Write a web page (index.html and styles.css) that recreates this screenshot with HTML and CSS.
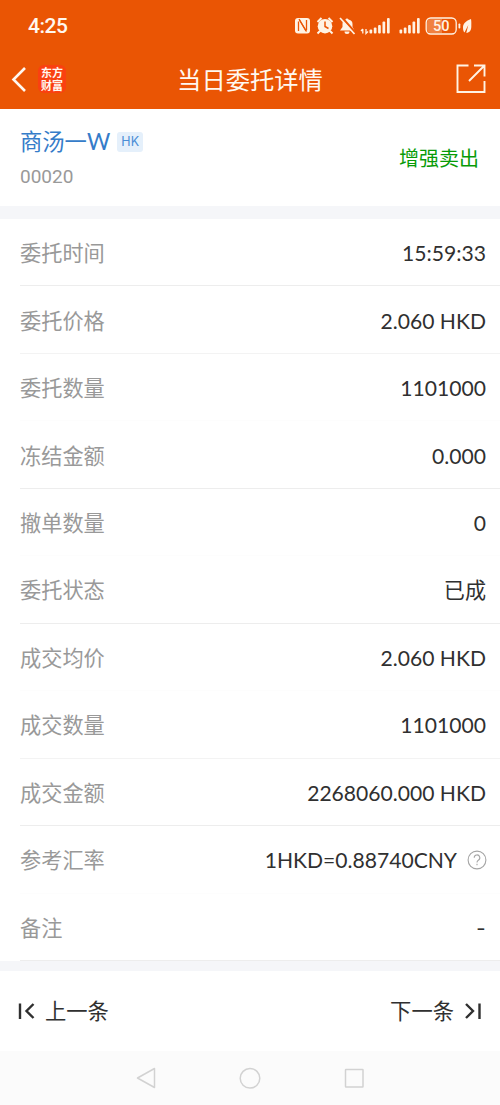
FILE: index.html
```html
<!DOCTYPE html>
<html lang="zh-CN">
<head>
<meta charset="utf-8">
<title>当日委托详情</title>
<link rel="stylesheet" href="styles.css">
</head>
<body>
<header class="top">
  <div class="status">
    <span class="clock">4:25</span>
    <svg class="status-icons" width="184" height="24" viewBox="0 0 184 24" fill="#fff3e4">
      <rect x="0" y="5" width="15" height="15.500" rx="3"/>
      <path d="M3.500 18V8.500M4.500 7l6.500 11M11.500 17V7" fill="none" stroke="#ea5504" stroke-width="1.300"/>
      <path d="M4 6l7.500 12.500" stroke="#ea5504" stroke-width="1.300"/>
      <circle cx="30" cy="13.200" r="7.300"/>
      <path d="M22.500 9l4-4M37.500 9l-4-4M25 18l-2.500 2.500M35 18l2.500 2.500" stroke="#fff3e4" stroke-width="2"/>
      <path d="M30 8.500v5l3.500 2" fill="none" stroke="#ea5504" stroke-width="1.500"/>
      <path d="M45 17.500l2.500-3.500v-3c0-3 1.500-4 3-4.500a1.600 1.600 0 0 1 3 0C56.500 7 57.500 9 57.500 11v3l2 3.500z"/>
      <path d="M49.500 18.500h5a2.500 2.500 0 0 1-5 0z"/>
      <path d="M46.500 4l14 16" stroke="#ea5504" stroke-width="2.400"/>
      <path d="M45 5l14.500 16" stroke="#fff3e4" stroke-width="1.700"/>
      <path d="M67.800 16v4.500M66 18l1.800-2M71 16v4.500l2-2" fill="none" stroke="#fff3e4" stroke-width="1.300"/>
      <rect x="74.500" y="16.500" width="2.700" height="4" rx="1"/><rect x="78.800" y="14.500" width="2.700" height="6" rx="1"/><rect x="83.100" y="12" width="2.700" height="8.500" rx="1"/><rect x="87.500" y="8.500" width="2.700" height="12" rx="1"/><rect x="92" y="5" width="2.700" height="15.500" rx="1"/>
      <rect x="104.500" y="16.500" width="2.700" height="4" rx="1"/><rect x="108.800" y="14.500" width="2.700" height="6" rx="1"/><rect x="113.100" y="12" width="2.700" height="8.500" rx="1"/><rect x="117.500" y="8.500" width="2.700" height="12" rx="1"/><rect x="122" y="5" width="2.700" height="15.500" rx="1"/>
      <rect x="131.200" y="5" width="30" height="16" rx="4.500" fill="none" stroke="#fff3e4" stroke-width="1.300"/>
      <path d="M147 6h-11a4 4 0 0 0-4 4v6a4 4 0 0 0 4 4h11z" opacity=".28"/>
      <text class="battery-text" x="146.300" y="18.300" text-anchor="middle">50</text>
      <rect x="163.500" y="10.500" width="1.800" height="5" rx=".8"/>
      <path d="M176 6c-5 2-8 4.500-8 8.500 0 2.500.5 4 1.500 5l3.800-7.500-2 8c3.500-.5 5-3 5-6.500 0-3 .2-4.500-.3-7.500z"/>
    </svg>
  </div>
  <div class="nav">
    <div class="nav-left">
      <svg width="16" height="26" viewBox="0 0 16 26"><path d="M14 2L2.500 13.500 14 25" fill="none" stroke="#fff8f0" stroke-width="2.600"/></svg>
      <span class="brand"><span>东方</span><span>财富</span></span>
    </div>
    <h1 class="title">当日委托详情</h1>
    <svg class="share" width="30" height="30" viewBox="0 0 30 30" fill="none" stroke="#fff3e4" stroke-width="1.900"><path d="M12.500 1.500H1.500v26.500h27V17M18 1.500h10.500v11M28.500 1.500L13 17"/></svg>
  </div>
</header>
<section class="stock">
  <div class="stock-info">
    <div class="name-line"><span class="name">商汤一<span class="suffix">W</span></span><span class="tag">HK</span></div>
    <div class="code">00020</div>
  </div>
  <span class="side">增强卖出</span>
</section>
<main class="rows">
  <div class="row"><span class="label">委托时间</span><span class="value">15:59:33</span></div>
  <div class="row light"><span class="label">委托价格</span><span class="value">2.060 HKD</span></div>
  <div class="row plain"><span class="label">委托数量</span><span class="value">1101000</span></div>
  <div class="row"><span class="label">冻结金额</span><span class="value">0.000</span></div>
  <div class="row plain"><span class="label">撤单数量</span><span class="value">0</span></div>
  <div class="row"><span class="label">委托状态</span><span class="value">已成</span></div>
  <div class="row plain"><span class="label">成交均价</span><span class="value">2.060 HKD</span></div>
  <div class="row light"><span class="label">成交数量</span><span class="value">1101000</span></div>
  <div class="row"><span class="label">成交金额</span><span class="value">2268060.000 HKD</span></div>
  <div class="row plain"><span class="label">参考汇率</span><span class="value rate">1HKD=0.88740CNY</span><svg class="help" width="20" height="20" viewBox="0 0 20 20" fill="none" stroke="#a5a5a5" stroke-width="1.100"><circle cx="10" cy="10" r="8.900"/><path d="M7.200 7.700a2.800 2.800 0 1 1 4.100 2.500c-1 .6-1.300 1-1.300 2.200M10 13.700v1.500"/></svg></div>
  <div class="row"><span class="label">备注</span><span class="value dash">-</span></div>
</main>
<footer class="pager">
  <span class="page-link"><svg width="18" height="18" viewBox="0 0 18 18" fill="none" stroke="#303030" stroke-width="2.400"><path d="M3 1.500v15.500M16.500 2l-7 7 7 7"/></svg><span class="page-text">上一条</span></span>
  <span class="page-link"><span class="page-text">下一条</span><svg width="18" height="18" viewBox="0 0 18 18" fill="none" stroke="#303030" stroke-width="2.400"><path d="M15.500 1.500v15.500M2 2l7 7-7 7"/></svg></span>
</footer>
<div class="system">
  <svg width="24" height="24" viewBox="0 0 24 24"><path d="M20.500 2.500v19L3.500 12z"/></svg>
  <svg width="24" height="24" viewBox="0 0 24 24"><circle cx="12" cy="12.300" r="9.800"/></svg>
  <svg width="24" height="24" viewBox="0 0 24 24"><rect x="3.500" y="3.500" width="17.500" height="17.500" rx=".5"/></svg>
</div>
</body>
</html>
```
FILE: styles.css
```css
* { box-sizing: border-box; }
body {
  margin: 0;
  width: 500px;
  height: 1105px;
  display: flex;
  flex-direction: column;
  background: #fff;
  color: #303030;
  font-family: Lato, "Noto Sans CJK SC", sans-serif;
  font-size: 21px;
  overflow: hidden;
}
svg { display: block; flex: none; }
.top { height: 109px; background: #ea5504; color: #fff8f0; }
.status { height: 50px; display: flex; justify-content: space-between; padding: 0 21px 0 28px; align-items: center; }
.clock { font: 500 21px/30px Roboto, sans-serif; letter-spacing: -.5px; padding-top: 1px; }
.battery-text { font: 500 14.500px Roboto, sans-serif; }
.nav { height: 59px; display: grid; grid-template-columns: 100px 1fr 100px; align-items: center; padding: 0 0 1px; }
.nav-left { display: flex; align-items: center; gap: 11px; padding-left: 11px; }
.brand { width: 28px; height: 28px; border-radius: 6px; background: #fa4010; font: 700 11px/13px "Liberation Sans", "Noto Sans CJK SC", sans-serif; display: flex; flex-direction: column; align-items: center; padding-top: 2px; }
.title { margin: 0; font: 400 24.300px/36px "Noto Sans CJK SC", sans-serif; text-align: center; white-space: nowrap; }
.share { justify-self: end; margin-right: 14px; }
.stock { height: 110px; border-bottom: 13px solid #f5f6f9; display: flex; justify-content: space-between; align-items: center; padding: 0 20px; }
.name-line { display: flex; align-items: center; gap: 7px; height: 34px; }
.name { color: #357cc9; font-size: 22.300px; line-height: 32px; display: flex; }
.suffix { font-size: 22.500px; }
.tag { width: 26px; height: 20px; border-radius: 3px; background: #e5f0fb; color: #4b8dd6; font: 12.500px/20px Inter, sans-serif; text-align: center; }
.stock-info { padding-top: 4px; }
.code { font: 19px/36px Roboto, sans-serif; color: #999; }
.side { color: #079b07; font-size: 20px; line-height: 30px; padding-right: 1px; }
.rows { height: 742px; display: grid; grid-template-rows: repeat(11, 1fr); }
.row { margin-left: 20px; display: flex; align-items: center; padding: 2px 14px 0 0; border-bottom: 1px solid #ededed; }
.light { border-bottom-color: #f3f3f3; }
.plain { border-bottom-color: #fdfdfd; }
.label { color: #999; margin-right: auto; font-size: 21.200px; line-height: 30px; }
.value { font-size: 21.100px; line-height: 30px; }
.dash { transform: scaleX(1.25); transform-origin: right; }
.help { margin-left: 10px; margin-right: -1px; }
.pager { height: 90px; border-top: 10px solid #f5f6f9; display: flex; justify-content: space-between; align-items: center; padding: 0 18px 0 17px; }
.page-link { display: flex; align-items: center; gap: 10px; }
.page-text { font-size: 21.300px; line-height: 30px; }
.system { height: 54px; background: #fbfbfb; display: flex; justify-content: center; gap: 80px; }
.system svg { margin-top: 15px; fill: none; stroke: #d2d2d2; stroke-width: 1.500; stroke-linejoin: round; }
```
